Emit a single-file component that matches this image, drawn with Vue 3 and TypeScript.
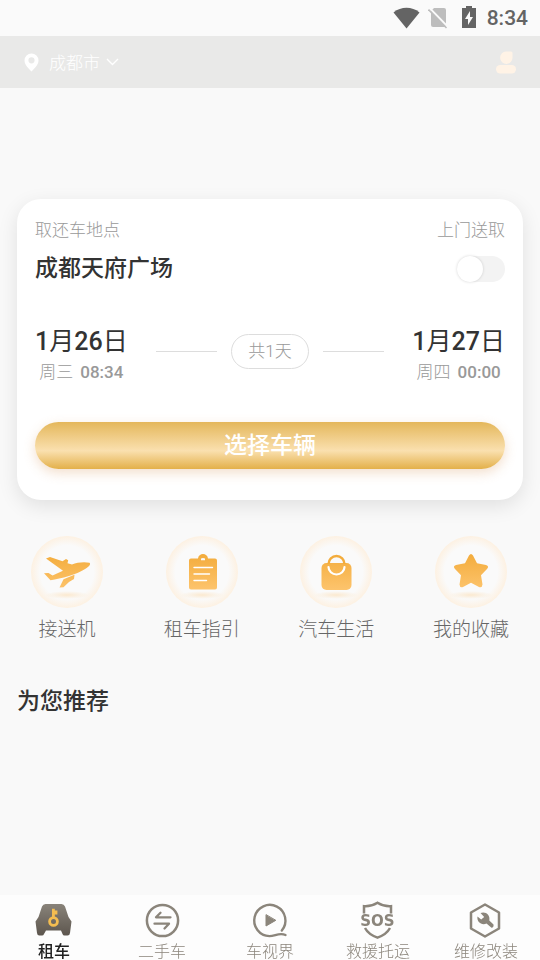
<script setup lang="ts">
import { ref } from 'vue'

interface Stop {
  month: number
  day: number
  week: string
  time: string
}

const city = ref('成都市')
const place = ref('成都天府广场')
const doorService = ref(false)
const pickUp: Stop = { month: 1, day: 26, week: '周三', time: '08:34' }
const dropOff: Stop = { month: 1, day: 27, week: '周四', time: '00:00' }

const services = [
  { id: 'plane', label: '接送机' },
  { id: 'guide', label: '租车指引' },
  { id: 'bag', label: '汽车生活' },
  { id: 'star', label: '我的收藏' },
]

const tabs = [
  { id: 'rent', label: '租车' },
  { id: 'used', label: '二手车' },
  { id: 'video', label: '车视界' },
  { id: 'sos', label: '救援托运' },
  { id: 'repair', label: '维修改装' },
]
const activeTab = ref('rent')
</script>

<template>
  <div class="page">
    <div class="status">
      <svg class="wifi" width="27" height="22" viewBox="0 0 27 22" aria-hidden="true">
        <path d="M0.5 5.5C8-.7 19-.7 26.500 5.500L13.500 21.500Z" fill="#646464" />
      </svg>
      <svg class="sim" width="20" height="22" viewBox="0 0 20 22" aria-hidden="true">
        <path d="M6 1h10q2 0 2 2v16q0 1-2 1H5q-2 0-2-2V4Z" fill="#bdbdbd" />
        <path d="M1.500 1 20 20" stroke="#fafafa" stroke-width="2" />
        <path d="M.5 2.500 18.500 21" stroke="#bdbdbd" stroke-width="1.600" />
      </svg>
      <svg class="battery" width="14" height="22" viewBox="0 0 14 22" aria-hidden="true">
        <path d="M4 0h6v2h4v20H0V2h4Z" fill="#646464" />
        <path d="M8 5 3 13h3v6l5-8H8Z" fill="#fafafa" />
      </svg>
      <span class="clock">8:34</span>
    </div>

    <header class="header">
      <button class="city" type="button">
        <svg width="15" height="19" viewBox="0 0 15 19" aria-hidden="true">
          <path fill="#fff" fill-rule="evenodd" d="M7.500.5A7 7 0 0 1 14.500 7.500C14.500 12 10 16 7.500 18.500C5 16 .5 12 .5 7.500A7 7 0 0 1 7.500.5ZM7.500 4.200A3.100 3.100 0 1 0 7.500 10.400A3.100 3.100 0 1 0 7.500 4.200Z" />
        </svg>
        <span class="city-name">{{ city }}</span>
        <svg width="13" height="8" viewBox="0 0 13 8" aria-hidden="true">
          <path d="M1 1l5.500 5.500L12 1" fill="none" stroke="#fff" stroke-width="1.400" />
        </svg>
      </button>
      <button class="user" type="button" aria-label="我的">
        <svg width="20" height="23" viewBox="0 0 20 23" aria-hidden="true">
          <path d="M10 .5h5q1.500 0 1.500 1.500v4.500a6.200 6.200 0 1 1-6.500-6Z" fill="#fff3e6" />
          <rect x="0" y="14" width="20" height="8.500" rx="4.200" fill="#fff3e6" />
        </svg>
      </button>
    </header>

    <main class="main">
      <section class="card">
        <div class="row">
          <span class="hint">取还车地点</span>
          <label class="hint" for="door">上门送取</label>
        </div>
        <div class="row place-row">
          <span class="place">{{ place }}</span>
          <input id="door" v-model="doorService" class="switch" type="checkbox" role="switch" />
        </div>
        <div class="dates">
          <div class="stop">
            <span class="date"><b>{{ pickUp.month }}</b>月<b>{{ pickUp.day }}</b>日</span>
            <span class="sub">{{ pickUp.week }}<span class="time">{{ pickUp.time }}</span></span>
          </div>
          <div class="span">
            <i class="line"></i>
            <span class="days">共1天</span>
            <i class="line"></i>
          </div>
          <div class="stop">
            <span class="date"><b>{{ dropOff.month }}</b>月<b>{{ dropOff.day }}</b>日</span>
            <span class="sub">{{ dropOff.week }}<span class="time">{{ dropOff.time }}</span></span>
          </div>
        </div>
        <button class="choose" type="button">选择车辆</button>
      </section>

      <section class="services">
        <a v-for="s in services" :key="s.id" class="service" href="#">
          <svg width="72" height="72" viewBox="0 0 72 72" aria-hidden="true">
            <defs>
              <radialGradient :id="`ring-${s.id}`">
                <stop offset="0.740" stop-color="#fafafa" />
                <stop offset="1" stop-color="#fdf1e2" />
              </radialGradient>
              <radialGradient :id="`shade-${s.id}`">
                <stop offset="0" stop-color="#fbe9d0" />
                <stop offset="1" stop-color="#fbe9d0" stop-opacity="0" />
              </radialGradient>
              <linearGradient :id="`gold-${s.id}`" x1="0" y1="18" x2="0" y2="54" gradientUnits="userSpaceOnUse">
                <stop offset="0" stop-color="#f3ac3c" />
                <stop offset="1" stop-color="#fdc46d" />
              </linearGradient>
            </defs>
            <circle cx="36" cy="36" r="36" :fill="`url(#ring-${s.id})`" />
            <ellipse cx="36" cy="59" rx="22" ry="4" :fill="`url(#shade-${s.id})`" />
            <g :fill="`url(#gold-${s.id})`">
              <path
                v-if="s.id === 'plane'"
                d="M15 22.500 19 21 31.500 25.200 35 23 37.200 24.300 36.500 27.300 41 28.500 C46 26.500 53 25.500 58.500 26.800 C59.600 27.500 59 29.500 57.500 30.500 C53 34.500 46 37.500 38 40 C31 42 25 43.500 19.500 44.300 L13 37.300 17.500 37 21.500 39.500 32 34.700ZM43.500 38.700 43 43 38 46 32.500 51.200 28.500 51.500 32.500 43.200Z"
              />
              <path
                v-else-if="s.id === 'guide'"
                fill-rule="evenodd"
                d="M25 22.500h7C32.500 16.500 41.500 16.500 42 22.500h7q2 0 2 2v27q0 2-2 2H25q-2 0-2-2v-27q0-2 2-2ZM35 22.500v1.800h4v-1.800q-2-1-4 0Z"
              />
              <template v-else-if="s.id === 'bag'">
                <rect x="21.500" y="27" width="30" height="27" rx="5" />
                <path d="M28.500 28a8 8 0 0 1 16 0" fill="none" stroke="#f3ac3c" stroke-width="2.400" />
              </template>
              <path
                v-else
                d="M34 19.500Q36 16.500 38 19.500L42 27.300 51 29Q54.500 30.200 52 33L46 39.200 47.500 48.500Q47.200 52 44 51L36 46.800 28 51Q24.800 52 24.500 48.500L26 39.200 20 33Q17.500 30.200 21 29L30 27.300Z"
              />
            </g>
            <path v-if="s.id === 'guide'" d="M28 31.500h18.500M28 38h15.500M28 44.500h12.500" fill="none" stroke="#fff" stroke-width="1.400" stroke-linecap="round" />
            <path v-if="s.id === 'bag'" d="M28.500 31a8 7.500 0 0 0 16 0" fill="none" stroke="#fff" stroke-width="2.200" stroke-linecap="round" />
          </svg>
          <span class="service-label">{{ s.label }}</span>
        </a>
      </section>

      <h2 class="heading">为您推荐</h2>
    </main>

    <nav class="tabs">
      <a v-for="t in tabs" :key="t.id" class="tab" :class="{ active: t.id === activeTab }" href="#" @click.prevent="activeTab = t.id">
        <svg v-if="t.id === 'rent'" width="38" height="38" viewBox="0 0 38 38" aria-hidden="true">
          <defs>
            <linearGradient id="car" x1="0" y1="0" x2="0" y2="1">
              <stop offset="0" stop-color="#89837a" />
              <stop offset="1" stop-color="#5d564e" />
            </linearGradient>
          </defs>
          <path d="M10.500 3h16q2.500 0 3.500 2.500L33.500 16 36.500 20.500 35 32q-.3 2.500-2.500 2.500h-3q-1.500 0-2-1.500l-1.500-3.500h-15L9 33q-.5 1.500-2 1.500H4.300q-2 0-2.300-2.500L.5 20.500 3.500 16 7 5.500Q8 3 10.500 3Z" fill="url(#car)" />
          <circle cx="18.500" cy="20.500" r="3.900" fill="none" stroke="#f4bd50" stroke-width="2.800" />
          <path d="M17 16.500V7.800h2.800v1.800h2.600v4h-2.600v3Z" fill="#f4bd50" />
        </svg>
        <svg v-else-if="t.id === 'used'" width="38" height="38" viewBox="0 0 38 38" fill="none" stroke="#8b857b" aria-hidden="true">
          <circle cx="19.500" cy="19.500" r="15.600" stroke-width="2.500" />
          <path d="M27.500 16.300H13l4.500-4.500M11.500 22.700H26l-4.500 4.800" stroke-width="2.300" stroke-linecap="round" stroke-linejoin="round" />
        </svg>
        <svg v-else-if="t.id === 'video'" width="38" height="38" viewBox="0 0 38 38" fill="none" stroke="#8b857b" stroke-width="2.400" stroke-linecap="round" aria-hidden="true">
          <path d="M30.800 29.500A15.600 15.600 0 1 0 18.500 35.100C24 35.100 28.500 31.200 34.500 34" />
          <path d="M15 14v11l9.500-5.500Z" fill="#8b857b" stroke-width="1" stroke-linejoin="round" />
        </svg>
        <svg v-else-if="t.id === 'sos'" width="38" height="38" viewBox="0 0 38 38" aria-hidden="true">
          <path d="M5 12.500V5.200Q12 5.700 18.500 1.700 25 5.700 32 5.200V12.500M6 27Q9.500 33.500 18.500 36.600 27.500 33.500 31 27" fill="none" stroke="#8b857b" stroke-width="2.500" />
          <text x="18.500" y="24.500" class="sos">SOS</text>
        </svg>
        <svg v-else width="38" height="38" viewBox="0 0 38 38" aria-hidden="true">
          <path d="M18 3.500 32 11.500V27.500L18 35.500 4 27.500V11.500Z" fill="none" stroke="#8b857b" stroke-width="2.500" stroke-linejoin="round" />
          <path d="M13.500 12C18.500 10 23.500 14 22.300 19.500L26.500 23.500Q27 26.500 24.500 26.800L19.500 22.600C14.500 25 9.500 20.500 10.500 15.500L14.200 18.500 17.200 16Z" fill="#8b857b" />
        </svg>
        <span class="tab-label">{{ t.label }}</span>
      </a>
    </nav>
  </div>
</template>

<style>
body {
  background: #f9f9f9;
}
</style>

<style scoped>
.page,
.page * {
  box-sizing: border-box;
}

.page {
  display: flex;
  flex-direction: column;
  min-height: 100vh;
  background: #f9f9f9;
  color: #333;
  font-family: Roboto, 'Noto Sans CJK SC', sans-serif;
}

button {
  padding: 0;
  border: 0;
  background: none;
  font-family: inherit;
  cursor: pointer;
}

a {
  color: inherit;
  text-decoration: none;
}

svg {
  display: block;
}

.status {
  display: flex;
  align-items: center;
  justify-content: flex-end;
  height: 36px;
  padding-right: 12px;
  background: #fafafa;
}

.sim {
  margin-left: 8px;
}

.battery {
  margin: 0 11px 2px 14px;
}

.clock {
  color: #646464;
  font-size: 21px;
  font-weight: 500;
  line-height: 36px;
}

.header {
  display: flex;
  align-items: center;
  justify-content: space-between;
  height: 52px;
  padding: 0 24px;
  background: #e9e9e8;
}

.city {
  display: flex;
  align-items: center;
  color: #fff;
}

.city-name {
  margin: 0 6px 0 10px;
  padding-top: 2px;
  font-size: 17px;
  font-weight: 300;
  line-height: 24px;
}

.main {
  flex: 1;
  padding: 111px 17px 20px;
}

.card {
  padding: 19px 18px 31px;
  border-radius: 24px;
  background: #fff;
  box-shadow: 0 6px 20px rgba(0, 0, 0, 0.1);
}

.row {
  display: flex;
  align-items: center;
  justify-content: space-between;
}

.hint {
  color: #999;
  font-size: 17px;
  font-weight: 300;
  line-height: 24px;
}

.place-row {
  margin-top: 10px;
}

.place {
  font-size: 23px;
  font-weight: 500;
  line-height: 34px;
}

.switch {
  appearance: none;
  display: flex;
  width: 48px;
  height: 26px;
  margin: 0;
  border-radius: 13px;
  background: #f3f3f3;
  cursor: pointer;
}

.switch::before {
  content: '';
  width: 26px;
  height: 26px;
  border-radius: 50%;
  background: #fff;
  box-shadow: 0 0 3px rgba(0, 0, 0, 0.16);
}

.switch:checked {
  justify-content: flex-end;
  background: #e7bd63;
}

.dates {
  display: flex;
  align-items: flex-start;
  justify-content: space-between;
  margin-top: 38px;
}

.stop {
  display: flex;
  flex-direction: column;
  align-items: center;
}

.date {
  font-size: 25px;
  font-weight: 400;
  line-height: 36px;
}

.date b {
  font-weight: 500;
}

.sub {
  color: #999;
  font-size: 17px;
  font-weight: 300;
  line-height: 24px;
}

.time {
  margin-left: 7px;
  font-weight: 500;
}

.span {
  flex: 1;
  display: flex;
  align-items: center;
  gap: 14px;
  margin: 10px 28px 0;
}

.line {
  flex: 1;
  height: 1px;
  background: #ddd;
}

.days {
  padding: 0 16px;
  border: 1px solid #ddd;
  border-radius: 18px;
  color: #999;
  font-size: 17px;
  font-weight: 300;
  line-height: 33px;
}

.choose {
  display: block;
  width: 100%;
  height: 47px;
  margin-top: 38px;
  border-radius: 24px;
  background: linear-gradient(#e4b75b, #fae0af 61%, #e3b04a);
  box-shadow: 0 4px 12px rgba(214, 150, 90, 0.3);
  color: #fff;
  font-size: 23px;
  font-weight: 500;
  line-height: 46px;
}

.services {
  display: flex;
  justify-content: space-between;
  margin-top: 36px;
  padding: 0 14px 0 12px;
}

.service {
  display: flex;
  flex-direction: column;
  align-items: center;
  width: 76px;
}

.service-label {
  margin-top: 8px;
  color: #666;
  font-size: 19px;
  font-weight: 300;
  line-height: 28px;
  white-space: nowrap;
}

.heading {
  margin: 41px 0 0;
  font-size: 23px;
  font-weight: 500;
  line-height: 34px;
}

.tabs {
  position: sticky;
  bottom: 0;
  display: flex;
  padding-top: 6px;
  background: #fdfdfd;
}

.tab {
  flex: 1;
  display: flex;
  flex-direction: column;
  align-items: center;
  gap: 5px;
}

.tab-label {
  color: #8b857b;
  font-size: 16px;
  font-weight: 300;
  line-height: 16px;
}

.active .tab-label {
  color: #222;
  font-weight: 500;
}

.sos {
  fill: #8b857b;
  font-family: 'DejaVu Sans', sans-serif;
  font-size: 15px;
  font-weight: 700;
  text-anchor: middle;
}
</style>
